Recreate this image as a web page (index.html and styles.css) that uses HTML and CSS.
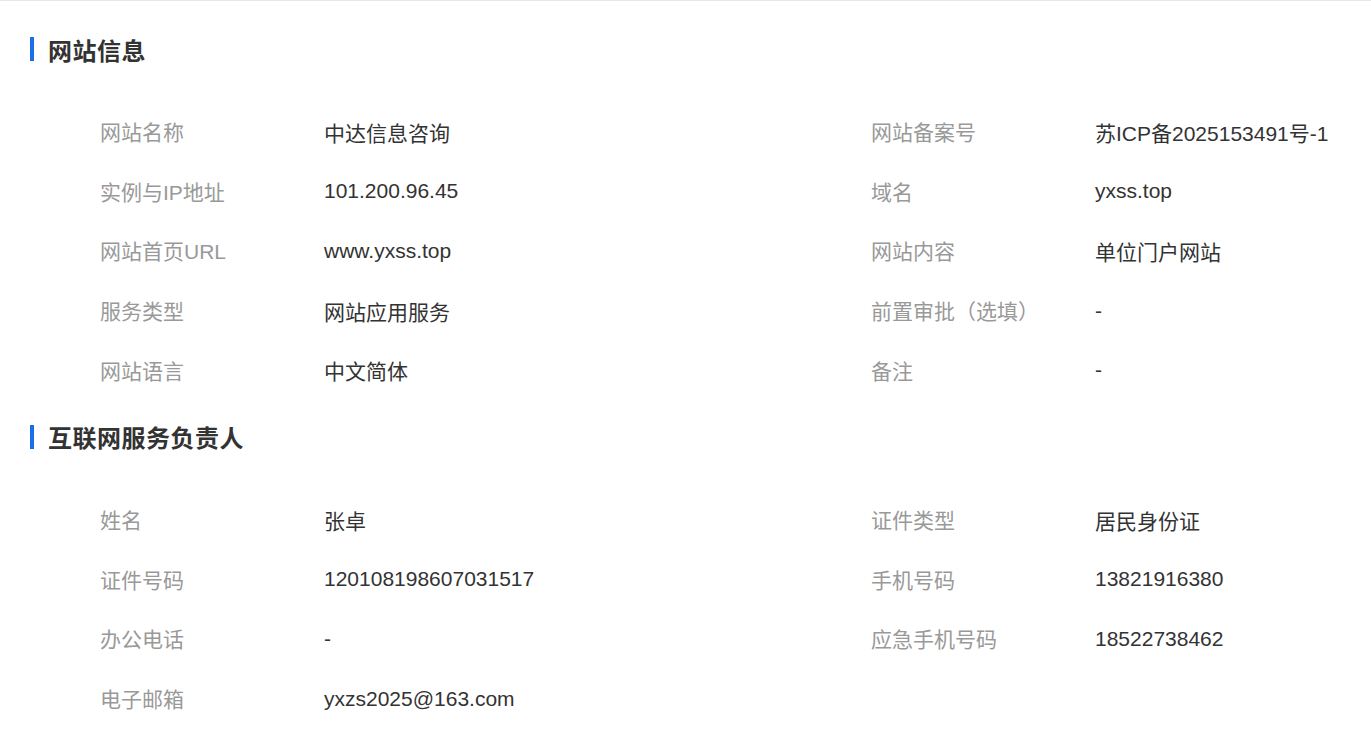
FILE: index.html
```html
<!DOCTYPE html>
<html lang="zh-CN">
<head>
    <meta charset="UTF-8">
    <meta name="viewport" content="width=device-width, initial-scale=1.0">
    <title>网站信息</title>
    <link rel="stylesheet" href="styles.css">
</head>
<body>
    <div class="page">
        <div class="section-title">网站信息</div>
        <div class="info-grid">
            <div class="label">网站名称</div>
            <div class="value">中达信息咨询</div>
            <div class="label">网站备案号</div>
            <div class="value">苏ICP备2025153491号-1</div>

            <div class="label">实例与IP地址</div>
            <div class="value">101.200.96.45</div>
            <div class="label">域名</div>
            <div class="value">yxss.top</div>

            <div class="label">网站首页URL</div>
            <div class="value">www.yxss.top</div>
            <div class="label">网站内容</div>
            <div class="value">单位门户网站</div>

            <div class="label">服务类型</div>
            <div class="value">网站应用服务</div>
            <div class="label">前置审批（选填）</div>
            <div class="value">-</div>

            <div class="label">网站语言</div>
            <div class="value">中文简体</div>
            <div class="label">备注</div>
            <div class="value">-</div>
        </div>

        <div class="section-title second">互联网服务负责人</div>
        <div class="info-grid">
            <div class="label">姓名</div>
            <div class="value">张卓</div>
            <div class="label">证件类型</div>
            <div class="value">居民身份证</div>

            <div class="label">证件号码</div>
            <div class="value">120108198607031517</div>
            <div class="label">手机号码</div>
            <div class="value">13821916380</div>

            <div class="label">办公电话</div>
            <div class="value">-</div>
            <div class="label">应急手机号码</div>
            <div class="value">18522738462</div>

            <div class="label">电子邮箱</div>
            <div class="value">yxzs2025@163.com</div>
        </div>
    </div>
</body>
</html>
```

FILE: styles.css
```css
body {
    margin: 0;
    background: #fff;
    font-family: "Liberation Sans", "Noto Sans CJK SC", sans-serif;
    color: #333;
}

.page {
    border-top: 1px solid #e8e8e8;
    padding: 36px 0 0 30px;
}

.section-title {
    display: flex;
    align-items: center;
    height: 24px;
    border-left: 4px solid #1a6eea;
    padding-left: 14px;
    font-family: "Noto Sans CJK SC", sans-serif;
    font-size: 24px;
    font-weight: bold;
    letter-spacing: 0.5px;
    color: #333;
}

.section-title.second {
    margin-top: 25px;
}

.info-grid {
    display: grid;
    grid-template-columns: 224px 547px 224px 1fr;
    grid-auto-rows: 59.6px;
    align-items: center;
    margin-top: 41px;
    padding-left: 70px;
    font-size: 21px;
}

.label {
    color: #999;
    white-space: nowrap;
    margin-top: -1px;
}

.value {
    color: #333;
    white-space: nowrap;
}
```
